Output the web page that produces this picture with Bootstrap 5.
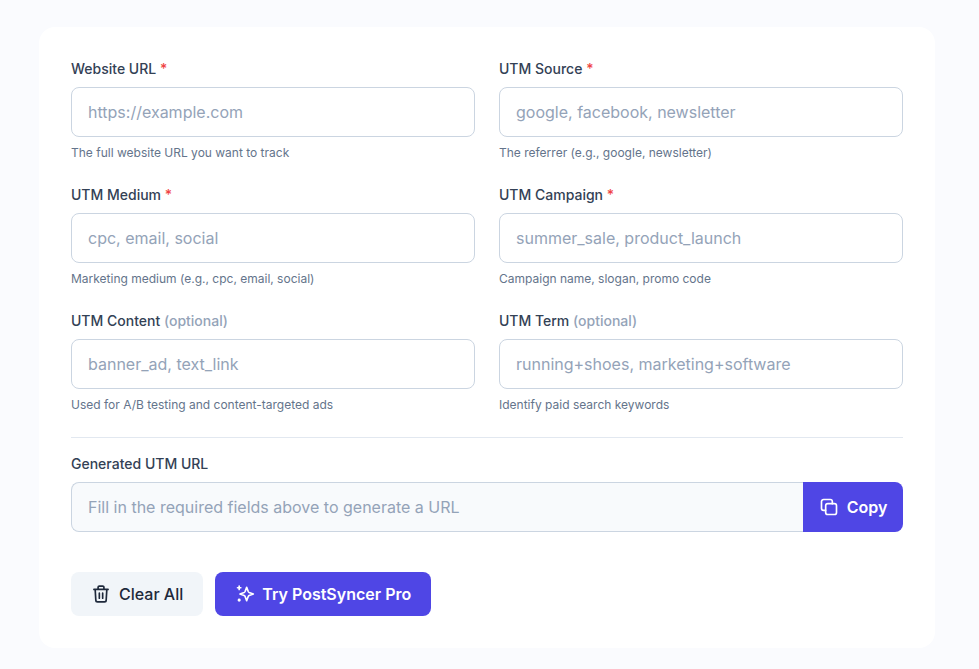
<!DOCTYPE html>
<html lang="en">
<head>
  <meta charset="UTF-8">
  <meta name="viewport" content="width=device-width, initial-scale=1.0">
  <title>UTM Builder</title>
  <link href="https://cdn.jsdelivr.net/npm/bootstrap@5.3.0/dist/css/bootstrap.min.css" rel="stylesheet">
  <style>
    body {
      background: #fafbfe;
      font-family: Inter, "Liberation Sans", sans-serif;
      color: #1e293b;
      overflow: hidden;
    }
    .page-wrap {
      padding: 27px 44px 0 39px;
    }
    .utm-card {
      background: #fff;
      border-radius: 16px;
      padding: 32px;
      height: 621px;
    }
    .utm-grid {
      display: grid;
      grid-template-columns: 1fr 1fr;
      column-gap: 24px;
      row-gap: 24px;
    }
    .utm-label {
      display: block;
      font-size: 14px;
      line-height: 20px;
      font-weight: 500;
      color: #334155;
      margin-bottom: 8px;
    }
    .req { color: #ef4444; }
    .opt { color: #94a3b8; }
    .utm-input {
      height: 50px;
      border: 1px solid #cbd5e1;
      border-radius: 8px;
      padding: 12px 16px;
      font-size: 16px;
      color: #1e293b;
    }
    .utm-input::placeholder { color: #94a3b8; opacity: 1; }
    .utm-help {
      font-size: 12px;
      line-height: 16px;
      color: #64748b;
      margin-top: 8px;
    }
    .utm-divider {
      border-top: 1px solid #e2e8f0;
      margin: 24px 0 16px;
    }
    .url-input {
      background: #f8fafc;
      border-radius: 8px 0 0 8px;
      border-right: 0;
    }
    .url-input:disabled, .url-input[readonly] { background: #f8fafc; }
    .btn-indigo {
      background: #4f46e5;
      border: 0;
      color: #fff;
      font-size: 16px;
      font-weight: 600;
      line-height: 24px;
      height: 44px;
      padding: 0 20px;
      border-radius: 8px;
    }
    .btn-indigo:hover { background: #4338ca; color: #fff; }
    .copy-btn {
      height: 50px;
      width: 100px;
      flex: none;
      border-radius: 0 8px 8px 0;
      padding: 0;
    }
    .btn-soft {
      background: #f1f5f9;
      border: 0;
      color: #1e293b;
      font-size: 16px;
      font-weight: 500;
      height: 44px;
      padding: 0 20px;
      border-radius: 8px;
    }
    .actions { margin-top: 40px; gap: 12px; }
    .pro-btn { column-gap: 7px !important; }
  </style>
</head>
<body>
  <div class="page-wrap">
    <div class="utm-card">
      <div class="utm-grid">
        <div>
          <label class="utm-label">Website URL <span class="req">*</span></label>
          <input type="text" class="form-control utm-input" placeholder="https://example.com">
          <div class="utm-help">The full website URL you want to track</div>
        </div>
        <div>
          <label class="utm-label">UTM Source <span class="req">*</span></label>
          <input type="text" class="form-control utm-input" placeholder="google, facebook, newsletter">
          <div class="utm-help">The referrer (e.g., google, newsletter)</div>
        </div>
        <div>
          <label class="utm-label">UTM Medium <span class="req">*</span></label>
          <input type="text" class="form-control utm-input" placeholder="cpc, email, social">
          <div class="utm-help">Marketing medium (e.g., cpc, email, social)</div>
        </div>
        <div>
          <label class="utm-label">UTM Campaign <span class="req">*</span></label>
          <input type="text" class="form-control utm-input" placeholder="summer_sale, product_launch">
          <div class="utm-help">Campaign name, slogan, promo code</div>
        </div>
        <div>
          <label class="utm-label">UTM Content <span class="opt">(optional)</span></label>
          <input type="text" class="form-control utm-input" placeholder="banner_ad, text_link">
          <div class="utm-help">Used for A/B testing and content-targeted ads</div>
        </div>
        <div>
          <label class="utm-label">UTM Term <span class="opt">(optional)</span></label>
          <input type="text" class="form-control utm-input" placeholder="running+shoes, marketing+software">
          <div class="utm-help">Identify paid search keywords</div>
        </div>
      </div>
      <div class="utm-divider"></div>
      <label class="utm-label">Generated UTM URL</label>
      <div class="d-flex">
        <input type="text" class="form-control utm-input url-input" readonly placeholder="Fill in the required fields above to generate a URL">
        <button type="button" class="btn btn-indigo copy-btn d-flex align-items-center justify-content-center gap-2">
          <svg width="20" height="20" viewBox="0 0 24 24" fill="none" stroke="currentColor" stroke-width="2" stroke-linecap="round" stroke-linejoin="round"><rect x="8" y="8" width="13" height="13" rx="2.5"/><path d="M16 8V5.5A2.5 2.5 0 0 0 13.5 3h-8A2.5 2.5 0 0 0 3 5.5v8A2.5 2.5 0 0 0 5.5 16H8"/></svg>
          Copy
        </button>
      </div>
      <div class="actions d-flex">
        <button type="button" class="btn btn-soft d-flex align-items-center gap-2">
          <svg width="20" height="20" viewBox="0 0 24 24" fill="none" stroke="currentColor" stroke-width="2" stroke-linecap="round" stroke-linejoin="round"><path d="M3.500 6.500h17M8.500 6.500V4a1.500 1.500 0 0 1 1.500-1.500h4A1.500 1.500 0 0 1 15.500 4v2.500M19 6.500l-.8 13a2 2 0 0 1-2 2H7.800a2 2 0 0 1-2-2L5 6.500M10 11v6M14 11v6"/></svg>
          Clear All
        </button>
        <button type="button" class="btn btn-indigo pro-btn d-flex align-items-center">
          <svg width="20" height="20" viewBox="0 0 24 24" fill="none" stroke="currentColor" stroke-width="2" stroke-linecap="round" stroke-linejoin="round"><path d="M14 4l1.900 5a2 2 0 0 0 1.100 1.100l5 1.900-5 1.900a2 2 0 0 0-1.100 1.100L14 20l-1.900-5a2 2 0 0 0-1.100-1.100L6 12l5-1.900a2 2 0 0 0 1.100-1.100z"/><path d="M5 2.500v4M3 4.500h4"/><path d="M5 19v.5" stroke-width="3.500"/></svg>
          Try PostSyncer Pro
        </button>
      </div>
    </div>
  </div>
  <script src="https://cdn.jsdelivr.net/npm/bootstrap@5.3.0/dist/js/bootstrap.bundle.min.js"></script>
</body>
</html>
